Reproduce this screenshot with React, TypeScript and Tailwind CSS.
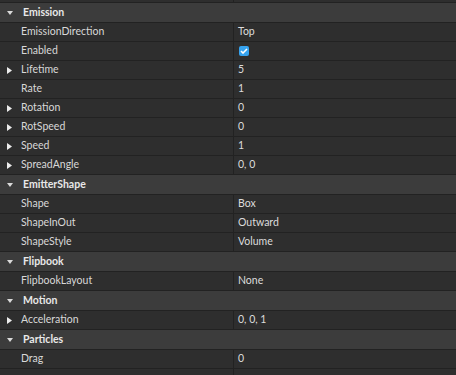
type Row =
  | { kind: "section"; label: string }
  | { kind: "prop"; label: string; value?: string; expand?: boolean; check?: boolean };

const rows: Row[] = [
  { kind: "section", label: "Emission" },
  { kind: "prop", label: "EmissionDirection", value: "Top" },
  { kind: "prop", label: "Enabled", check: true },
  { kind: "prop", label: "Lifetime", value: "5", expand: true },
  { kind: "prop", label: "Rate", value: "1" },
  { kind: "prop", label: "Rotation", value: "0", expand: true },
  { kind: "prop", label: "RotSpeed", value: "0", expand: true },
  { kind: "prop", label: "Speed", value: "1", expand: true },
  { kind: "prop", label: "SpreadAngle", value: "0, 0", expand: true },
  { kind: "section", label: "EmitterShape" },
  { kind: "prop", label: "Shape", value: "Box" },
  { kind: "prop", label: "ShapeInOut", value: "Outward" },
  { kind: "prop", label: "ShapeStyle", value: "Volume" },
  { kind: "section", label: "Flipbook" },
  { kind: "prop", label: "FlipbookLayout", value: "None" },
  { kind: "section", label: "Motion" },
  { kind: "prop", label: "Acceleration", value: "0, 0, 1", expand: true },
  { kind: "section", label: "Particles" },
  { kind: "prop", label: "Drag", value: "0" },
  { kind: "prop", label: "" },
];

function DownArrow() {
  return (
    <svg width="6" height="4" viewBox="0 0 6 4" className="shrink-0">
      <path d="M0 0 H6 L3 4 Z" fill="#dadada" />
    </svg>
  );
}

function RightArrow() {
  return (
    <svg width="5" height="7" viewBox="0 0 5 7" className="shrink-0">
      <path d="M0 0 L5 3.5 L0 7 Z" fill="#ececec" />
    </svg>
  );
}

function Checkbox() {
  return (
    <div className="w-[10px] h-[10px] rounded-[2px] bg-[#36a3ef] flex items-center justify-center">
      <svg width="8" height="6" viewBox="0 0 8 6">
        <path d="M1 3 L3 5 L7 1" stroke="#ffffff" strokeWidth="1.6" fill="none" />
      </svg>
    </div>
  );
}

export default function App() {
  return (
    <div
      className="w-[456px] h-[375px] overflow-hidden bg-[#2e2e2e] text-[10.5px]"
      style={{ fontFamily: "Lato, 'Liberation Sans', sans-serif" }}
    >
      <div className="h-[2px] flex">
        <div className="w-[234px] border-r border-[#222222]" />
      </div>
      {rows.map((row, i) =>
        row.kind === "section" ? (
          <div
            key={i}
            className="h-[20px] flex items-center border-t border-[#222222] bg-[#3c3c3c]"
          >
            <div className="w-[19px] flex justify-center">
              <DownArrow />
            </div>
            <span className="ml-[4px] font-bold text-[#e8e8e8]">{row.label}</span>
          </div>
        ) : (
          <div key={i} className="h-[19px] flex border-t border-[#222222]">
            <div className="w-[234px] flex items-center border-r border-[#222222]">
              <div className="w-[19px] flex justify-center">
                {row.expand && <RightArrow />}
              </div>
              <span className="ml-[2px] text-[#d8d8d8]">{row.label}</span>
            </div>
            <div className="flex-1 flex items-center pl-[4px] text-[#dcdcdc]">
              {row.check ? <div className="pl-[1px]"><Checkbox /></div> : row.value}
            </div>
          </div>
        )
      )}
    </div>
  );
}
